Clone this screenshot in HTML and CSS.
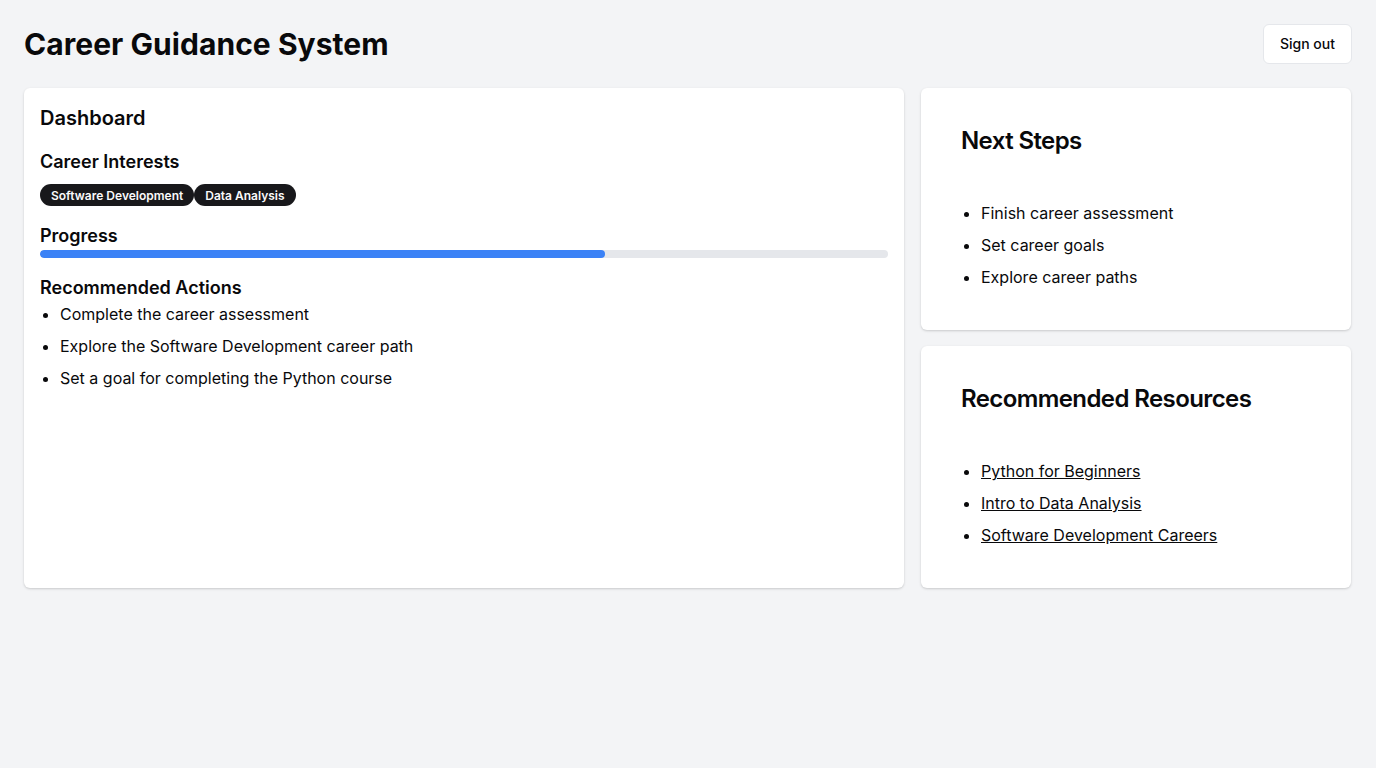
FILE: index.html
```html
<!DOCTYPE html>
<html lang="en">
<head>
<meta charset="utf-8">
<title>Career Guidance System</title>
<link rel="stylesheet" href="styles.css">
</head>
<body>
<div class="page">
  <header class="topbar">
    <h1 class="app-title">Career Guidance System</h1>
    <button class="btn-outline" type="button">Sign out</button>
  </header>
  <main class="grid">
    <section class="card card-main">
      <h2 class="card-heading">Dashboard</h2>
      <h3 class="section-title first">Career Interests</h3>
      <div class="badges">
        <span class="badge">Software Development</span>
        <span class="badge">Data Analysis</span>
      </div>
      <h3 class="section-title">Progress</h3>
      <div class="progress"><div class="progress-fill" style="width: 66.67%"></div></div>
      <h3 class="section-title">Recommended Actions</h3>
      <ul class="list">
        <li>Complete the career assessment</li>
        <li>Explore the Software Development career path</li>
        <li>Set a goal for completing the Python course</li>
      </ul>
    </section>
    <div class="side">
      <section class="card card-side">
        <h2 class="side-title">Next Steps</h2>
        <ul class="list side-list">
          <li>Finish career assessment</li>
          <li>Set career goals</li>
          <li>Explore career paths</li>
        </ul>
      </section>
      <section class="card card-side">
        <h2 class="side-title">Recommended Resources</h2>
        <ul class="list side-list">
          <li><a href="#">Python for Beginners</a></li>
          <li><a href="#">Intro to Data Analysis</a></li>
          <li><a href="#">Software Development Careers</a></li>
        </ul>
      </section>
    </div>
  </main>
</div>
</body>
</html>
```
FILE: styles.css
```css
* { box-sizing: border-box; }
html, body { margin: 0; padding: 0; }
body {
  background: #f3f4f6;
  font-family: Inter, "Noto Sans", sans-serif;
  color: #09090b;
}
.page { padding: 24px; }
.topbar {
  display: flex;
  align-items: center;
  justify-content: space-between;
  height: 40px;
  margin-bottom: 24px;
}
.app-title {
  margin: 0;
  font-size: 30px;
  line-height: 36px;
  font-weight: 700;
  letter-spacing: 0.05px;
}
.btn-outline {
  height: 40px;
  padding: 0 16px 2px;
  background: #fff;
  border: 1px solid #e5e7eb;
  border-radius: 6px;
  font-family: inherit;
  font-size: 14px;
  font-weight: 500;
  color: #09090b;
}
.grid {
  display: grid;
  grid-template-columns: repeat(3, 1fr);
  gap: 16px;
}
.card {
  background: #fff;
  border-radius: 6px;
  box-shadow: 0 1px 3px rgba(0,0,0,0.12), 0 1px 2px rgba(0,0,0,0.06);
}
.card-main {
  grid-column: span 2;
  padding: 16px;
}
.card-heading {
  margin: 0 0 16px;
  font-size: 20px;
  line-height: 28px;
  font-weight: 600;
}
.section-title {
  margin: 16px 0 0;
  font-size: 18px;
  line-height: 28px;
  font-weight: 600;
}
.section-title.first { margin-top: 0; }
.badges {
  display: flex;
  gap: 0;
  margin-top: 8px;
}
.badge {
  display: inline-flex;
  align-items: center;
  height: 22px;
  padding: 0 11px;
  border-radius: 999px;
  background: #18181b;
  color: #fafafa;
  font-size: 12px;
  font-weight: 600;
}
.progress {
  height: 8px;
  background: #e5e7eb;
  border-radius: 999px;
  overflow: hidden;
}
.progress-fill {
  height: 100%;
  background: #3b82f6;
  border-radius: 999px;
}
.list {
  margin: 0;
  padding-left: 20px;
  font-size: 16px;
  line-height: 24px;
}
.list li { margin-bottom: 8px; }
.list li:last-child { margin-bottom: 0; }
.list a { color: #09090b; text-decoration: underline; }
.side {
  display: grid;
  grid-template-rows: 1fr 1fr;
  gap: 16px;
  margin: 0 1px;
}
.card-side {
  padding: 41px 40px 41px;
}
.side-title {
  margin: 0;
  font-size: 24px;
  line-height: 24px;
  font-weight: 600;
  letter-spacing: -0.6px;
}
.side-list { margin-top: 48px; }
```
